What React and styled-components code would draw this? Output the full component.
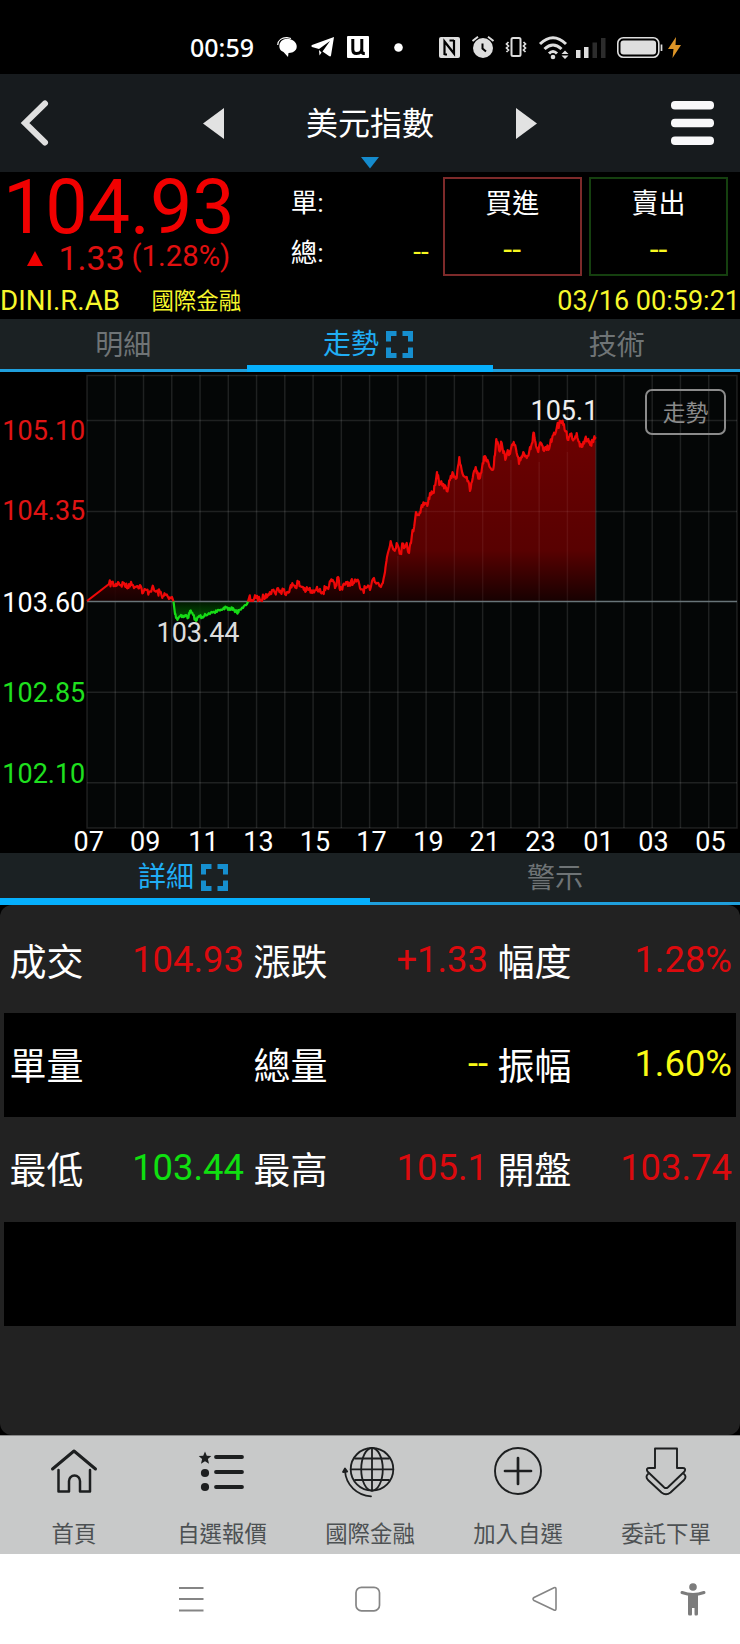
import React from "react";
import styled, { createGlobalStyle } from "styled-components";

const Global = createGlobalStyle`
  * { box-sizing: border-box; }
  body { margin: 0; background: #000; }
`;

const Screen = styled.div`
  width: 740px;
  height: 1644px;
  display: flex;
  flex-direction: column;
  background: #000;
  color: #fff;
  font-family: Roboto, "Noto Sans CJK TC", sans-serif;
  white-space: nowrap;
  overflow: hidden;
`;

/* ---------- status bar ---------- */
const StatusBar = styled.div`
  height: 74px;
  padding: 21px 59px 0 190px;
  display: flex;
  justify-content: space-between;
`;
const StatusGroup = styled.div`
  display: flex;
  align-items: center;
  height: 52px;
`;
const Clock = styled.span`
  width: 87px;
  font: 500 25px/51px "Noto Sans", sans-serif;
`;
const Icon = styled.svg`
  display: block;
  flex: none;
  overflow: visible;
  margin-right: ${(p) => p.$gap || 0}px;
`;

/* ---------- title bar ---------- */
const TitleBar = styled.header`
  height: 98px;
  padding: 0 26px 0 20px;
  display: flex;
  align-items: center;
  justify-content: space-between;
  background: #171b1e;
`;
const TitleNav = styled.div`
  width: 334px;
  height: 98px;
  margin-left: 20px;
  display: flex;
  align-items: center;
  justify-content: space-between;
`;
const TitleBlock = styled.div`
  height: 98px;
  display: flex;
  flex-direction: column;
  align-items: center;
`;
const Title = styled.h1`
  margin: 31px 0 14px;
  font-size: 32px;
  font-weight: 400;
  line-height: 38px;
`;

/* ---------- quote ---------- */
const Quote = styled.section`
  height: 147px;
  display: flex;
  flex-direction: column;
`;
const QuoteTop = styled.div`
  height: 111px;
  padding-right: 12px;
  display: flex;
`;
const PriceBlock = styled.div`
  width: 291px;
  color: #f10000;
`;
const Price = styled.div`
  padding: 2px 0 0 3px;
  font-size: 75.4px;
  line-height: 67px;
`;
const Change = styled.div`
  height: 35px;
  padding-left: 27px;
  display: flex;
  align-items: center;
  color: #e01010;
`;
const ChangeValue = styled.span`
  width: 73px;
  margin-left: 15.5px;
  font-size: 34px;
  line-height: 35px;
`;
const ChangePercent = styled.span`
  font-size: 29.3px;
  line-height: 31px;
  padding-bottom: 4px;
`;
const Volumes = styled.div`
  width: 152px;
  padding: 7px 14px 0 0;
`;
const VolumeRow = styled.div`
  height: 50px;
  display: flex;
  justify-content: space-between;
  font-size: 26.5px;
  line-height: 48px;
`;
const Dash = styled.span`
  color: #f8f820;
  font-size: 28px;
  line-height: 46px;
`;
const OrderBox = styled.div`
  width: 139px;
  height: 99px;
  margin: 5px 7.5px 0 0;
  padding-top: 8px;
  display: flex;
  flex-direction: column;
  align-items: center;
  border: 2px solid ${(p) => p.$edge};
  font-size: 27px;
  line-height: 34px;
  &:last-child { margin-right: 0; }
`;
const OrderPrice = styled.span`
  margin-top: 11px;
  color: #f8f820;
  font-size: 32px;
`;
const QuoteFooter = styled.div`
  height: 36px;
  display: flex;
  color: #f7f72c;
  font-size: 27px;
  line-height: 36px;
`;
const Symbol = styled.span`
  font-size: 27.7px;
`;
const Market = styled.span`
  flex: 1;
  margin-left: 31.5px;
  font-size: 22.4px;
`;

/* ---------- tabs ---------- */
const Tabs = styled.nav`
  height: ${(p) => p.$height}px;
  flex: none;
  display: grid;
  grid-template-columns: repeat(${(p) => p.$count}, 1fr);
  background: #1b2123;
`;
const Tab = styled.div`
  display: flex;
  justify-content: center;
  align-items: center;
  gap: 7px;
  font-size: 28px;
  line-height: 1;
  padding: ${(p) => p.$drop}px ${(p) => (p.$active ? 4 : 0)}px 0 0;
  color: ${(p) => (p.$active ? "#20aef5" : "#6f7476")};
  border-bottom: ${(p) => (p.$active ? "7px solid #06b0fd" : "3px solid #1f9fdc")};
`;

/* ---------- chart ---------- */
const ChartPanel = styled.section`
  position: relative;
  height: 481px;
`;
const ChartMode = styled.button`
  position: absolute;
  top: 17px;
  left: 645px;
  width: 81px;
  height: 46px;
  padding: 2px 0 0;
  border: 2px solid #8b8b8b;
  border-radius: 7px;
  background: transparent;
  color: #8b8b8b;
  font: 400 22.8px/42px Roboto, "Noto Sans CJK TC", sans-serif;
`;
const ChartSvg = styled.svg`
  display: block;
  overflow: visible;
  text { font-family: Roboto, sans-serif; font-size: 27px; }
`;

/* ---------- details ---------- */
const Details = styled.section`
  height: 530px;
  padding: 4px;
  border-radius: 12px;
  background: #222;
`;
const DetailRow = styled.div`
  height: 104.2px;
  display: grid;
  grid-template-columns: repeat(3, 1fr);
  &:nth-child(even) { background: #000; }
`;
const DetailCell = styled.div`
  padding: 0 4px 0 5.5px;
  display: flex;
  justify-content: space-between;
`;
const DetailLabel = styled.span`
  font-size: 37px;
  line-height: 109px;
`;
const tones = { up: "#dc0a0e", down: "#0fe010", flat: "#f9f916" };
const DetailValue = styled.span`
  font-size: 36.4px;
  line-height: 101px;
  color: ${(p) => tones[p.$tone]};
`;

/* ---------- bottom bars ---------- */
const BottomNav = styled.nav`
  height: 119px;
  padding-top: 1px;
  display: flex;
  background: #c8c9c9;
  border-top: 1px solid #888;
`;
const NavItem = styled.div`
  flex: 1;
  display: flex;
  flex-direction: column;
  align-items: center;
  padding-top: 8px;
  color: #4d5153;
  font-size: 22.4px;
  line-height: 30px;
  svg { margin-bottom: 24px; }
`;
const SystemNav = styled.nav`
  height: 90px;
  padding: 0 33px 0 178px;
  display: flex;
  align-items: center;
  background: #fff;
`;

const ExpandIcon = () => (
  <Icon width="27" height="27" viewBox="0 0 27 27" fill="none" stroke="#168fcf" strokeWidth="5">
    <path d="M2.5 10.5V2.5H10.5M16.5 2.5H24.5V10.5M24.5 16.5V24.5H16.5M10.5 24.5H2.5V16.5" />
  </Icon>
);

const ink = { fill: "none", stroke: "#1d1f20", strokeLinecap: "round", strokeLinejoin: "round" };

const HomeIcon = () => (
  <Icon width="50" height="50" viewBox="0 0 50 50" {...ink} strokeWidth="2.5">
    <path d="M3.5 24L25 6L46.500 24" strokeWidth="3" />
    <path d="M9.500 25V46.500H20V36A5.500 5.500 0 0 1 31 36V46.500H41V25" />
  </Icon>
);
const ListIcon = () => (
  <Icon width="50" height="50" viewBox="0 0 50 50" {...ink} strokeWidth="3.800">
    <path d="M19 12H45M19 27H45M19 42H45" />
    <g fill="#1d1f20" stroke="none">
      <path d="M8 6.500L9.800 10.800L14.300 11.100L10.900 14.100L12 18.800L8 16.200L4 18.800L5.100 14.100L1.700 11.100L6.200 10.800Z" />
      <circle cx="8" cy="28" r="4.100" />
      <circle cx="8" cy="42" r="4.100" />
    </g>
  </Icon>
);
const GlobeIcon = () => (
  <Icon width="50" height="50" viewBox="0 0 50 50" {...ink} strokeWidth="1.800">
    <circle cx="27" cy="24.300" r="21.300" />
    <ellipse cx="27" cy="24.300" rx="10.800" ry="21.300" />
    <path d="M27 3V45.600M5.700 24.300H48.300M10 13.500H44M10 35H44" />
    <path d="M0 26C1 40 12 50.500 26 51.300" />
    <path d="M-2 27L0 23.500L2.200 26.500Z" fill="#1d1f20" />
  </Icon>
);
const AddIcon = () => (
  <Icon width="50" height="50" viewBox="0 0 50 50" {...ink}>
    <circle cx="25" cy="26" r="23" strokeWidth="1.900" />
    <path d="M12 26H38M25 13V39" strokeWidth="2.700" />
  </Icon>
);
const OrderIcon = () => (
  <Icon width="50" height="50" viewBox="0 0 50 50" {...ink} strokeWidth="1.900">
    <path d="M14 3.500H36V23H41.500Q45.500 23 43.500 26.500L27 42.200Q25 44 23 42.200L6.500 26.500Q4.500 23 8.500 23H14Z" />
    <path d="M7 29Q4 31.500 7 35L20.500 47.500Q25 51 29.500 47.500L43 35Q46 31.500 43 29" />
  </Icon>
);

/* Minute series, in panel pixels measured from the top of the screen. */
const series = [
  87,601,100,591,109,584,112,583,115,586,118,582,121,585,124,583,127,588,129,584,133,585,137,586,140,585,143,593,146,590,149,592,152,588,155,591,158,593,160,592,163,596,166,595,169,599,172,597,173.5,601.5,
  175,614,177,619,179,617,181,615,184,617,186,615,188,618,190,611,193,615,196,621,199,616,202,617,205,614,210,614,215,613,219,610,223,609,226,607,230,610,233,608,237,613,239,610,243,608,247,604,248,601.5,
  249,598,252,600,256,598,260,600,264,597,266,594,269,595,272,590,275,593,278,588,281,593,283,590,287,592,290,588,293,585,296,586,298,582,300,586,303,587,306,591,309,589,312,593,316,590,320,589,323,592,326,587,329,586,332,581,335,588,338,577,340,590,343,585,346,582,348,586,351,581,354,583,357,580,360,588,363,590,366,588,370,590,
  374,578,377,583,382,584,385,572,387,557,390.7,541,394,550,396.7,543,400.7,553,402.7,544,405,547,406.7,543,409,553,411.7,537,415,520,416,512,419,515,421.7,505,425,503,427.3,506,430,493,433.3,492,435.3,485,437,472,439.3,485,443.3,484,446.7,491,450,480,453.3,474,456.7,478,459.3,457,462.3,473,466.7,477,470,491,472.7,478,475.7,467,477.7,475,480,478,482.7,463,485,456,488.3,462,492.7,470,495,455,496.3,439,499,450,501.7,443,503.3,453,506,458,507.7,450,510,454,513.7,442,516.7,453,519,464,521,458,523.3,452,526.7,458,530,447,532,443,534,433,536,446,538.3,452,541,443,543.3,450,546.7,450,550,445,553.3,435,556.7,428,560.7,421,563.3,425,566,431,568.3,440,570.500,434,574,439,576.7,433,579.3,442,581.7,447,585,439,588.3,439,590.7,444,593.3,442,595.5,437,
];
const BASE = 601.5;
const buildSeries = () => {
  const pts = [];
  let seed = 7;
  const rand = () => ((seed = (seed * 16807) % 2147483647) / 2147483647 - 0.5) * 7;
  for (let i = 0; i < series.length; i += 2) {
    const [x, y, nx, ny] = series.slice(i, i + 4);
    pts.push([x, y]);
    if (nx === undefined || x < 109) continue;
    const inner = nx - x > 1.9 ? 3 : 0;
    for (let k = 1; k <= inner; k++) {
      const t = k / (inner + 1);
      const below = x >= 173 && x < 248;
      const v = y + (ny - y) * t + rand() * (below ? 0.5 : 1);
      pts.push([x + (nx - x) * t, below ? Math.max(BASE + 0.5, v) : Math.min(BASE - 0.5, v)]);
    }
  }
  return pts;
};
const points = buildSeries();
const segment = (from, to) => points.filter(([x]) => x >= from && x <= to);
const line = (pts) => "M" + pts.map(([x, y]) => `${x.toFixed(1)} ${y.toFixed(1)}`).join("L");
const area = (pts) => `${line(pts)}L${pts[pts.length - 1][0]} ${BASE}L${pts[0][0]} ${BASE}Z`;
const segments = [
  { pts: segment(87, 173.5), stroke: "#ee0808", fill: "url(#rise)" },
  { pts: segment(173.5, 248), stroke: "#16dc16", fill: "url(#fall)" },
  { pts: segment(248, 600), stroke: "#ee0808", fill: "url(#rise)" },
];
const prices = [
  ["105.10", 440, "#e01414"],
  ["104.35", 520, "#e01414"],
  ["103.60", 611.5, "#fff"],
  ["102.85", 701.5, "#1fe01f"],
  ["102.10", 782.5, "#1fe01f"],
];
const hours = [
  ["07", 88.7], ["09", 145.2], ["11", 203.5], ["13", 258.5], ["15", 315], ["17", 371.5],
  ["19", 428.5], ["21", 484.8], ["23", 540.5], ["01", 598.5], ["03", 653.5], ["05", 710.5],
];

const TrendChart = () => (
  <ChartSvg width="740" height="481" viewBox="0 372 740 481">
    <defs>
      <linearGradient id="rise" gradientUnits="userSpaceOnUse" x1="0" y1="420" x2="0" y2="601">
        <stop offset="0" stopColor="#7c0000" />
        <stop offset=".72" stopColor="#640000" />
        <stop offset="1" stopColor="#1a0000" />
      </linearGradient>
      <linearGradient id="fall" gradientUnits="userSpaceOnUse" x1="0" y1="602" x2="0" y2="620">
        <stop offset="0" stopColor="#001c00" />
        <stop offset="1" stopColor="#006800" />
      </linearGradient>
    </defs>
    <rect x="87" y="375" width="650" height="453" fill="#040606" />
    <g stroke="#fff" strokeOpacity=".11" strokeWidth="1.500" fill="none">
      <rect x="87" y="375.500" width="650" height="452.500" />
      {Array.from({ length: 22 }, (_, i) => (
        <path key={i} d={`M${115.26 + i * 28.26} 375V828`} />
      ))}
      <path d="M87 420.500H737M87 511.500H737M87 692.200H737M87 782.800H737" />
    </g>
    {segments.map((s, i) => <path key={i} d={area(s.pts)} fill={s.fill} fillOpacity=".88" />)}
    <g stroke="#fff" strokeOpacity=".05" strokeWidth="1.500">
      {Array.from({ length: 8 }, (_, i) => (
        <path key={i} d={`M${397.86 + i * 28.26} ${[556, 508, 478, 470, 460, 462, 452, 441][i]}V601`} />
      ))}
      <path d="M420 511.500H595" />
    </g>
    <path d="M87 601.500H737" stroke="#687478" strokeWidth="1.500" />
    {segments.map((s, i) => (
      <path key={i} d={line(s.pts)} fill="none" stroke={s.stroke} strokeWidth="2.200" strokeLinejoin="round" />
    ))}
    {prices.map(([label, y, fill]) => (
      <text key={label} x="85.300" y={y} textAnchor="end" fill={fill}>{label}</text>
    ))}
    {hours.map(([h, x]) => (
      <text key={h} x={x} y="850.500" textAnchor="middle" fill="#fff">{h}</text>
    ))}
    <text x="156.500" y="641.500" fill="#ddd">103.44</text>
    <text x="530.500" y="420.300" fill="#eee">105.1</text>
  </ChartSvg>
);

const details = [
  [["成交", "104.93", "up"], ["漲跌", "+1.33", "up"], ["幅度", "1.28%", "up"]],
  [["單量", "", "flat"], ["總量", "--", "flat"], ["振幅", "1.60%", "flat"]],
  [["最低", "103.44", "down"], ["最高", "105.1", "up"], ["開盤", "103.74", "up"]],
  [],
  [],
];
const navItems = [
  ["首頁", HomeIcon],
  ["自選報價", ListIcon],
  ["國際金融", GlobeIcon],
  ["加入自選", AddIcon],
  ["委託下單", OrderIcon],
];

export default function App() {
  return (
    <Screen>
      <Global />
      <StatusBar>
        <StatusGroup>
          <Clock>00:59</Clock>
          <Icon $gap={14} width="20" height="20" viewBox="0 0 20 20" fill="#fff">
            <path d="M3 6C5 2 10 1 14 2.500C19 4 21 9 19 12.500C17.500 15 14.500 16 11.500 16L11 20L6.500 15C2.500 13.500 1.500 9.500 3 6Z" />
            <path d="M.7 8C1 3 5 .5 10 .700L14 1.500" fill="none" stroke="#fff" strokeWidth="1.200" />
          </Icon>
          <Icon $gap={13} width="23" height="20" viewBox="0 0 23 20" fill="#fff">
            <path d="M23 0L20 18.500Q19.500 20 18 19L11.500 14.500L19 4L8 12L1 10Q-.5 9 1 8Z" />
            <path d="M8 13L10.500 15.500L8.500 18.500Z" />
          </Icon>
          <Icon $gap={25} width="22" height="22" viewBox="0 0 22 22">
            <rect width="22" height="22" rx="1" fill="#fff" />
            <path d="M5.800 3V13.500Q5.800 17.500 9.500 17.500Q14.800 17.500 14.800 12.500V3M14.800 12V15.500Q15 17.500 17.800 17.500" fill="none" stroke="#000" strokeWidth="3" />
          </Icon>
          <Icon width="9" height="9" viewBox="0 0 9 9"><circle cx="4.500" cy="4.500" r="4.300" fill="#fff" /></Icon>
        </StatusGroup>
        <StatusGroup>
          <Icon $gap={12} width="21" height="21" viewBox="0 0 21 21">
            <rect width="21" height="21" rx="2" fill="#dedede" />
            <path d="M5.500 18V4.500L15 16.500V3M10.500 3.500H15M5.500 17.500H8" fill="none" stroke="#000" strokeWidth="2.200" />
          </Icon>
          <Icon $gap={11} width="22" height="22" viewBox="0 0 22 22" fill="none" stroke="#dedede" strokeWidth="2">
            <circle cx="11" cy="12" r="10" fill="#dedede" stroke="none" />
            <path d="M.5 5L6 .8M21.500 5L16 .8" />
            <path d="M10.500 7.500V12.500L14 15.500" stroke="#000" />
          </Icon>
          <Icon $gap={12} width="22" height="20" viewBox="0 0 22 20" fill="none" stroke="#dedede" strokeWidth="2">
            <rect x="6.500" y="1" width="9" height="18" rx="1.500" />
            <path d="M3.500 5L1.500 7L3.500 9L1.500 11L3.500 13L1.500 15M18.500 5L20.500 7L18.500 9L20.500 11L18.500 13L20.500 15" strokeWidth="1.700" />
          </Icon>
          <Icon $gap={7} width="30" height="23" viewBox="0 0 30 23" fill="none" stroke="#dedede" strokeWidth="3">
            <path d="M1 8Q14 -4.500 27 8M5.500 13Q14 5 22.500 13M10 17.500Q14 13.500 18 17.500" />
            <circle cx="14" cy="21" r="2.300" fill="#dedede" stroke="none" />
            <path d="M22.500 18L26 14.500L29.500 18ZM22.500 19.500L26 23L29.500 19.500Z" fill="#dedede" stroke="none" />
          </Icon>
          <Icon $gap={11} width="30" height="21" viewBox="0 0 30 21">
            <path d="M0 13H4.500V21H0ZM8 10H12.500V21H8Z" fill="#dedede" />
            <path d="M16.500 5.500H21V21H16.500ZM25 1H29.500V21H25Z" fill="#2c2c2c" />
          </Icon>
          <Icon $gap={5} width="46" height="21" viewBox="0 0 46 21" fill="none" stroke="#dedede">
            <rect x=".8" y=".8" width="41" height="19.400" rx="5.500" strokeWidth="1.600" />
            <rect x="3.500" y="3.500" width="35.600" height="14" rx="3" fill="#dedede" stroke="none" />
            <path d="M44.500 7.500V14" strokeWidth="1.700" />
          </Icon>
          <Icon width="13" height="21" viewBox="0 0 13 21"><path d="M8 0L0 12H5.500L4.500 21L13 8H7.500Z" fill="#dd9527" /></Icon>
        </StatusGroup>
      </StatusBar>

      <TitleBar>
        <Icon width="30" height="46" viewBox="0 0 30 46" fill="none" stroke="#dfdfdf" strokeWidth="6">
          <path d="M25 3.500L5 23L25 42.500" strokeLinecap="round" strokeLinejoin="miter" />
        </Icon>
        <TitleNav>
          <Icon width="21" height="31" viewBox="0 0 21 31"><path d="M21 0V31L0 15.500Z" fill="#e2e2e2" /></Icon>
          <TitleBlock>
            <Title>美元指數</Title>
            <Icon width="18" height="12" viewBox="0 0 18 12"><path d="M0 0H18L9 11.500Z" fill="#158bcd" /></Icon>
          </TitleBlock>
          <Icon width="21" height="31" viewBox="0 0 21 31"><path d="M0 0V31L21 15.500Z" fill="#e2e2e2" /></Icon>
        </TitleNav>
        <Icon width="44" height="44" viewBox="0 0 44 44" fill="#f8f8fa">
          <rect x="1" width="43" height="8.500" rx="4" />
          <rect x="1" y="17.800" width="43" height="8.500" rx="4" />
          <rect x="1" y="35.500" width="43" height="8.500" rx="4" />
        </Icon>
      </TitleBar>

      <Quote>
        <QuoteTop>
          <PriceBlock>
            <Price>104.93</Price>
            <Change>
              <Icon width="16" height="15" viewBox="0 0 16 15"><path d="M8 0L16 15H0Z" fill="#f10000" /></Icon>
              <ChangeValue>1.33</ChangeValue>
              <ChangePercent>(1.28%)</ChangePercent>
            </Change>
          </PriceBlock>
          <Volumes>
            <VolumeRow><span>單:</span></VolumeRow>
            <VolumeRow><span>總:</span><Dash>--</Dash></VolumeRow>
          </Volumes>
          <OrderBox $edge="#7d2a2a">買進<OrderPrice>--</OrderPrice></OrderBox>
          <OrderBox $edge="#15400f">賣出<OrderPrice>--</OrderPrice></OrderBox>
        </QuoteTop>
        <QuoteFooter>
          <Symbol>DINI.R.AB</Symbol>
          <Market>國際金融</Market>
          <span>03/16 00:59:21</span>
        </QuoteFooter>
      </Quote>

      <Tabs $height={53} $count={3}>
        <Tab $drop={4}>明細</Tab>
        <Tab $drop={5} $active>走勢<ExpandIcon /></Tab>
        <Tab $drop={4}>技術</Tab>
      </Tabs>
      <ChartPanel>
        <TrendChart />
        <ChartMode>走勢</ChartMode>
      </ChartPanel>
      <Tabs $height={52} $count={2}>
        <Tab $drop={4} $active>詳細<ExpandIcon /></Tab>
        <Tab $drop={2}>警示</Tab>
      </Tabs>

      <Details>
        {details.map((row, i) => (
          <DetailRow key={i}>
            {row.map(([label, value, tone]) => (
              <DetailCell key={label}>
                <DetailLabel>{label}</DetailLabel>
                <DetailValue $tone={tone}>{value}</DetailValue>
              </DetailCell>
            ))}
          </DetailRow>
        ))}
      </Details>

      <BottomNav>
        {navItems.map(([label, Glyph]) => (
          <NavItem key={label}><Glyph />{label}</NavItem>
        ))}
      </BottomNav>
      <SystemNav>
        <Icon $gap={151} width="26" height="26" viewBox="0 0 26 26" stroke="#858585" strokeWidth="2">
          <path d="M1 2H25.500M1 13H25.500M1 24.500H25.500" />
        </Icon>
        <Icon $gap={151} width="26" height="26" viewBox="0 0 26 26" fill="none" stroke="#858585" strokeWidth="1.700">
          <rect x="1" y="1.300" width="23.500" height="23.500" rx="5.500" />
        </Icon>
        <Icon $gap={122} width="26" height="26" viewBox="0 0 26 26" fill="none" stroke="#858585" strokeWidth="1.600" strokeLinejoin="round">
          <path d="M2 11.500L22 1.800Q24 1 24 3V22.500Q24 25 22 24L2 14.500Q0 13 2 11.500Z" />
        </Icon>
        <Icon width="26" height="33" viewBox="0 0 26 33" fill="#7c7c7c">
          <circle cx="13" cy="4" r="3.800" />
          <path d="M2 9.500Q13 13.500 24 9.500" fill="none" stroke="#7c7c7c" strokeWidth="3" strokeLinecap="round" />
          <path d="M8 10.500H18V31Q18 32.500 16.500 32.500H15.500Q14.500 32.500 14.500 31V25H12V31Q12 32.500 11 32.500H9.500Q8 32.500 8 31Z" />
        </Icon>
      </SystemNav>
    </Screen>
  );
}
